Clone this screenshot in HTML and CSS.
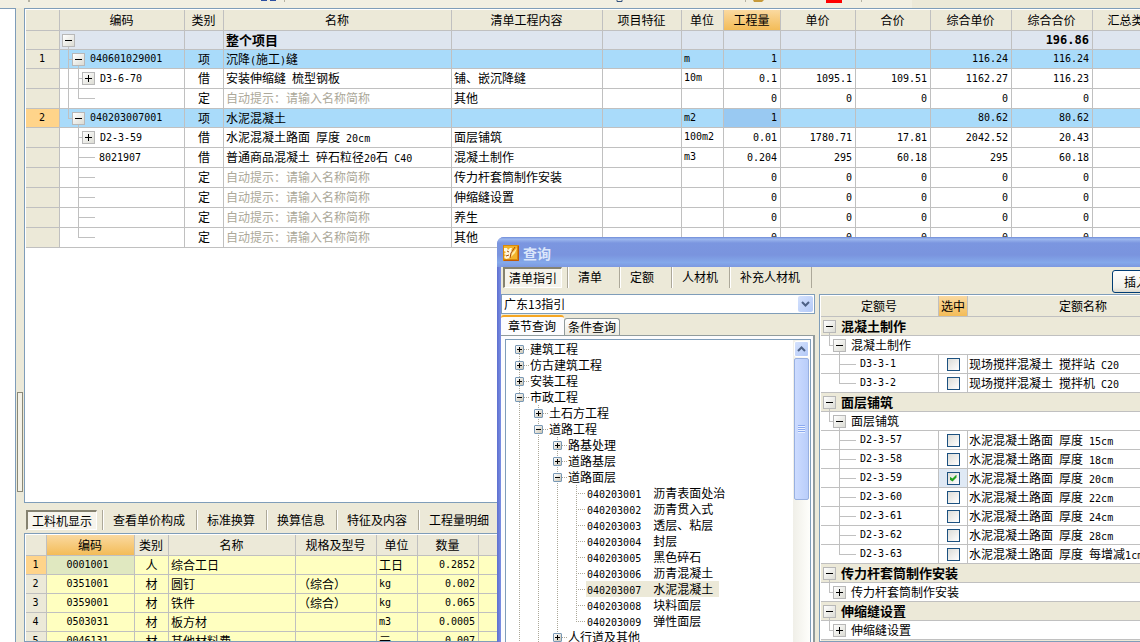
FILE: index.html
```html
<!DOCTYPE html>
<html lang="zh-CN">
<head>
<meta charset="utf-8">
<title>查询</title>
<link rel="stylesheet" href="styles.css">
</head>
<body>
<header class="strip">
  <svg width="912" height="3" aria-hidden="true">
    <rect x="28" width="2" height="2" fill="#b5b2a3"/>
    <path d="M261 0h6v1h-6zM270 0h6v1h-6z" fill="#2b4fa0"/>
    <rect x="284" width="1" height="2" fill="#b5b2a3"/>
    <path d="M617 0v1.500h5V0" fill="none" stroke="#33527e"/>
    <rect x="745" width="1" height="2" fill="#b5b2a3"/>
    <path d="M753 0h11l-2 2h-8z" fill="#c79a3a"/>
    <rect x="826" width="16" height="3" fill="#f00"/>
    <rect x="861" width="1" height="2" fill="#b5b2a3"/>
  </svg>
</header>
<div class="work">
  <aside class="side"></aside>
  <div class="splitter"><span class="handle"></span></div>
  <main class="main">
    <section class="panel bill">
      <table class="grid bill-grid">
        <colgroup><col class="w34"><col class="w125"><col class="w39"><col class="w228"><col class="w151"><col class="w79"><col class="w42"><col class="w57"><col class="w75"><col class="w75"><col class="w81"><col class="w81"><col class="w79"></colgroup>
        <thead>
          <tr><th></th><th>编码</th><th>类别</th><th>名称</th><th>清单工程内容</th><th>项目特征</th><th>单位</th><th class="hot">工程量</th><th>单价</th><th>合价</th><th>综合单价</th><th>综合合价</th><th>汇总类别</th></tr>
        </thead>
        <tbody>
          <tr class="total short"><th></th><td class="tc"><div class="tree l1 down"><button class="box minus" aria-label="折叠"></button></div></td><td></td><td><b class="strong">整个项目</b></td><td></td><td></td><td></td><td></td><td></td><td></td><td></td><td class="num big">196.86</td><td></td></tr>
          <tr class="item short"><th class="n">1</th><td class="tc"><div class="tree l2 a-full down"><button class="box minus" aria-label="折叠"></button><span class="n">040601029001</span></div></td><td class="mid">项</td><td>沉降<span class="n">(</span>施工<span class="n">)</span>缝</td><td></td><td></td><td class="n">m</td><td class="num">1</td><td></td><td></td><td class="num">116.24</td><td class="num">116.24</td><td></td></tr>
          <tr><th></th><td class="tc"><div class="tree l3 a-full b-full"><button class="box plus" aria-label="展开"></button><span class="n">D3-6-70</span></div></td><td class="mid">借</td><td>安装伸缩缝<span class="n"> </span>梳型钢板</td><td>铺、嵌沉降缝</td><td></td><td class="n">10m</td><td class="num">0.1</td><td class="num">1095.1</td><td class="num">109.51</td><td class="num">1162.27</td><td class="num">116.23</td><td></td></tr>
          <tr><th></th><td class="tc"><div class="tree leaf a-full b-half"></div></td><td class="mid">定</td><td class="hint">自动提示：请输入名称简称</td><td>其他</td><td></td><td></td><td class="num">0</td><td class="num">0</td><td class="num">0</td><td class="num">0</td><td class="num">0</td><td></td></tr>
          <tr class="item short"><th class="n now">2</th><td class="tc"><div class="tree l2 a-half down"><button class="box minus" aria-label="折叠"></button><span class="n">040203007001</span></div></td><td class="mid">项</td><td>水泥混凝土</td><td></td><td></td><td class="n">m2</td><td class="num cursor">1</td><td></td><td></td><td class="num">80.62</td><td class="num">80.62</td><td></td></tr>
          <tr><th></th><td class="tc"><div class="tree l3 b-full"><button class="box plus" aria-label="展开"></button><span class="n">D2-3-59</span></div></td><td class="mid">借</td><td>水泥混凝土路面<span class="n"> </span>厚度<span class="n"> 20cm</span></td><td>面层铺筑</td><td></td><td class="n">100m2</td><td class="num">0.01</td><td class="num">1780.71</td><td class="num">17.81</td><td class="num">2042.52</td><td class="num">20.43</td><td></td></tr>
          <tr><th></th><td class="tc"><div class="tree leaf b-full"><span class="n">8021907</span></div></td><td class="mid">借</td><td>普通商品混凝土<span class="n"> </span>碎石粒径<span class="n">20</span>石<span class="n"> C40</span></td><td>混凝土制作</td><td></td><td class="n">m3</td><td class="num">0.204</td><td class="num">295</td><td class="num">60.18</td><td class="num">295</td><td class="num">60.18</td><td></td></tr>
          <tr><th></th><td class="tc"><div class="tree leaf b-full"></div></td><td class="mid">定</td><td class="hint">自动提示：请输入名称简称</td><td>传力杆套筒制作安装</td><td></td><td></td><td class="num">0</td><td class="num">0</td><td class="num">0</td><td class="num">0</td><td class="num">0</td><td></td></tr>
          <tr><th></th><td class="tc"><div class="tree leaf b-full"></div></td><td class="mid">定</td><td class="hint">自动提示：请输入名称简称</td><td>伸缩缝设置</td><td></td><td></td><td class="num">0</td><td class="num">0</td><td class="num">0</td><td class="num">0</td><td class="num">0</td><td></td></tr>
          <tr><th></th><td class="tc"><div class="tree leaf b-full"></div></td><td class="mid">定</td><td class="hint">自动提示：请输入名称简称</td><td>养生</td><td></td><td></td><td class="num">0</td><td class="num">0</td><td class="num">0</td><td class="num">0</td><td class="num">0</td><td></td></tr>
          <tr><th></th><td class="tc"><div class="tree leaf b-half"></div></td><td class="mid">定</td><td class="hint">自动提示：请输入名称简称</td><td>其他</td><td></td><td></td><td class="num">0</td><td class="num">0</td><td class="num">0</td><td class="num">0</td><td class="num">0</td><td></td></tr>
        </tbody>
      </table>
    </section>
    <section class="detail">
      <nav class="tools detail-tools">
        <button class="tool pressed">工料机显示</button>
        <button class="tool">查看单价构成</button>
        <button class="tool">标准换算</button>
        <button class="tool">换算信息</button>
        <button class="tool">特征及内容</button>
        <button class="tool">工程量明细</button>
      </nav>
      <div class="panel">
        <table class="grid parts-grid">
          <colgroup><col class="w21"><col class="w88"><col class="w34"><col class="w127"><col class="w81"><col class="w41"><col class="w61"><col></colgroup>
          <thead><tr><th></th><th class="hot">编码</th><th>类别</th><th>名称</th><th>规格及型号</th><th>单位</th><th>数量</th><th></th></tr></thead>
          <tbody>
            <tr class="short"><th class="n now">1</th><td class="code picked">0001001</td><td class="mid">人</td><td>综合工日</td><td></td><td>工日</td><td class="num">0.2852</td><td></td></tr>
            <tr class="short"><th class="n">2</th><td class="code">0351001</td><td class="mid">材</td><td>圆钉</td><td>（综合）</td><td class="n">kg</td><td class="num">0.002</td><td></td></tr>
            <tr class="short"><th class="n">3</th><td class="code">0359001</td><td class="mid">材</td><td>铁件</td><td>（综合）</td><td class="n">kg</td><td class="num">0.065</td><td></td></tr>
            <tr class="short"><th class="n">4</th><td class="code">0503031</td><td class="mid">材</td><td>板方材</td><td></td><td class="n">m3</td><td class="num">0.0005</td><td></td></tr>
            <tr class="short"><th class="n">5</th><td class="code">0046131</td><td class="mid">材</td><td>其他材料费</td><td></td><td>元</td><td class="num">0.007</td><td></td></tr>
          </tbody>
        </table>
      </div>
    </section>
  </main>
</div>

<section class="dialog" role="dialog" aria-labelledby="dlg-title">
  <div class="titlebar">
    <svg width="16" height="16" viewBox="0 0 16 16" aria-hidden="true">
      <rect width="16" height="16" fill="#d8890c"/>
      <path d="M1 1h13v13H1z" fill="#f3b32a"/>
      <path d="M1 3h3l1 2 2-2h2L8 6l2-1-2 4-1 4-4 1-2-2 2-2-2-1 2-2-2-1z" fill="#fff8dc"/>
      <path d="M12 2L8 8l-1 5M4 6l2 1M3 11l3-1" fill="none" stroke="#a84a05"/>
      <path d="M14 3L9 8l-1 4 4-4z" fill="#ffe9a0"/>
      <path d="M15.500 1v14.500H1" fill="none" stroke="#c25a06"/>
    </svg>
    <h2 id="dlg-title">查询</h2>
  </div>
  <div class="dialog-body">
    <div class="dialog-tools">
      <nav class="tools">
        <button class="tool pressed">清单指引</button>
        <button class="tool">清单</button>
        <button class="tool">定额</button>
        <button class="tool">人材机</button>
        <button class="tool">补充人材机</button>
      </nav>
      <button class="insert">插入</button>
    </div>
    <div class="columns">
      <div class="finder">
        <div class="combo">
          <select aria-label="指引"><option>广东13指引</option></select>
          <span class="arrow"><svg width="9" height="6" viewBox="0 0 9 6" aria-hidden="true"><path d="M1 1l3.500 3.500L8 1" fill="none" stroke="#4d6185" stroke-width="2"/></svg></span>
        </div>
        <div class="tabs" role="tablist">
          <button class="tab on" role="tab" aria-selected="true">章节查询</button>
          <button class="tab" role="tab" aria-selected="false">条件查询</button>
        </div>
        <div class="page">
          <div class="outline">
            <ul class="nodes">
              <li><div class="node"><button class="knob plus" aria-label="展开"></button><span>建筑工程</span></div></li>
              <li><div class="node"><button class="knob plus" aria-label="展开"></button><span>仿古建筑工程</span></div></li>
              <li><div class="node"><button class="knob plus" aria-label="展开"></button><span>安装工程</span></div></li>
              <li><div class="node"><button class="knob minus" aria-label="折叠"></button><span>市政工程</span></div>
                <ul>
                  <li><div class="node"><button class="knob plus" aria-label="展开"></button><span>土石方工程</span></div></li>
                  <li><div class="node"><button class="knob minus" aria-label="折叠"></button><span>道路工程</span></div>
                    <ul>
                      <li><div class="node"><button class="knob plus" aria-label="展开"></button><span>路基处理</span></div></li>
                      <li><div class="node"><button class="knob plus" aria-label="展开"></button><span>道路基层</span></div></li>
                      <li><div class="node"><button class="knob minus" aria-label="折叠"></button><span>道路面层</span></div>
                        <ul class="ends">
                          <li><div class="node end"><span><span class="n">040203001  </span>沥青表面处治</span></div></li>
                          <li><div class="node end"><span><span class="n">040203002  </span>沥青贯入式</span></div></li>
                          <li><div class="node end"><span><span class="n">040203003  </span>透层、粘层</span></div></li>
                          <li><div class="node end"><span><span class="n">040203004  </span>封层</span></div></li>
                          <li><div class="node end"><span><span class="n">040203005  </span>黑色碎石</span></div></li>
                          <li><div class="node end"><span><span class="n">040203006  </span>沥青混凝土</span></div></li>
                          <li><div class="node end"><span class="sel"><span class="n">040203007  </span>水泥混凝土</span></div></li>
                          <li><div class="node end"><span><span class="n">040203008  </span>块料面层</span></div></li>
                          <li><div class="node end"><span><span class="n">040203009  </span>弹性面层</span></div></li>
                        </ul>
                      </li>
                      <li><div class="node"><button class="knob plus" aria-label="展开"></button><span>人行道及其他</span></div></li>
                    </ul>
                  </li>
                </ul>
              </li>
            </ul>
            <div class="scroll">
              <button class="up" aria-label="向上"><svg width="9" height="6" viewBox="0 0 9 6" aria-hidden="true"><path d="M1 5l3.500-3.500L8 5" fill="none" stroke="#4d6185" stroke-width="2"/></svg></button>
              <div class="thumb"><span></span></div>
            </div>
          </div>
        </div>
      </div>
      <div class="panel quota">
        <table class="grid quota-grid">
          <colgroup><col class="w118"><col class="w29"><col></colgroup>
          <thead><tr><th>定额号</th><th class="hot tight">选中</th><th>定额名称</th></tr></thead>
          <tbody>
            <tr class="group short"><td colspan="3" class="tc"><div class="tree l1 down"><button class="box minus" aria-label="折叠"></button><span class="strong">混凝土制作</span></div></td></tr>
            <tr class="short"><td colspan="3" class="tc"><div class="tree l2 a-half down"><button class="box minus" aria-label="折叠"></button><span>混凝土制作</span></div></td></tr>
            <tr class="short"><td class="tc"><div class="tree leaf b-full"><span class="n">D3-3-1</span></div></td><td class="mark"><input type="checkbox" aria-label="D3-3-1"></td><td class="name">现场搅拌混凝土<span class="n"> </span>搅拌站<span class="n"> C20</span></td></tr>
            <tr class="short"><td class="tc"><div class="tree leaf b-half"><span class="n">D3-3-2</span></div></td><td class="mark"><input type="checkbox" aria-label="D3-3-2"></td><td class="name">现场搅拌混凝土<span class="n"> </span>搅拌机<span class="n"> C20</span></td></tr>
            <tr class="group short"><td colspan="3" class="tc"><div class="tree l1 down"><button class="box minus" aria-label="折叠"></button><span class="strong">面层铺筑</span></div></td></tr>
            <tr class="short"><td colspan="3" class="tc"><div class="tree l2 a-half down"><button class="box minus" aria-label="折叠"></button><span>面层铺筑</span></div></td></tr>
            <tr class="short"><td class="tc"><div class="tree leaf b-full"><span class="n">D2-3-57</span></div></td><td class="mark"><input type="checkbox" aria-label="D2-3-57"></td><td class="name">水泥混凝土路面<span class="n"> </span>厚度<span class="n"> 15cm</span></td></tr>
            <tr class="short"><td class="tc"><div class="tree leaf b-full"><span class="n">D2-3-58</span></div></td><td class="mark"><input type="checkbox" aria-label="D2-3-58"></td><td class="name">水泥混凝土路面<span class="n"> </span>厚度<span class="n"> 18cm</span></td></tr>
            <tr class="short"><td class="tc"><div class="tree leaf b-full"><span class="n">D2-3-59</span></div></td><td class="mark focus"><input type="checkbox" aria-label="D2-3-59" checked></td><td class="name">水泥混凝土路面<span class="n"> </span>厚度<span class="n"> 20cm</span></td></tr>
            <tr class="short"><td class="tc"><div class="tree leaf b-full"><span class="n">D2-3-60</span></div></td><td class="mark"><input type="checkbox" aria-label="D2-3-60"></td><td class="name">水泥混凝土路面<span class="n"> </span>厚度<span class="n"> 22cm</span></td></tr>
            <tr class="short"><td class="tc"><div class="tree leaf b-full"><span class="n">D2-3-61</span></div></td><td class="mark"><input type="checkbox" aria-label="D2-3-61"></td><td class="name">水泥混凝土路面<span class="n"> </span>厚度<span class="n"> 24cm</span></td></tr>
            <tr class="short"><td class="tc"><div class="tree leaf b-full"><span class="n">D2-3-62</span></div></td><td class="mark"><input type="checkbox" aria-label="D2-3-62"></td><td class="name">水泥混凝土路面<span class="n"> </span>厚度<span class="n"> 28cm</span></td></tr>
            <tr class="short"><td class="tc"><div class="tree leaf b-half"><span class="n">D2-3-63</span></div></td><td class="mark"><input type="checkbox" aria-label="D2-3-63"></td><td class="name">水泥混凝土路面<span class="n"> </span>厚度<span class="n"> </span>每增减<span class="n">1cm</span></td></tr>
            <tr class="group short"><td colspan="3" class="tc"><div class="tree l1 down"><button class="box minus" aria-label="折叠"></button><span class="strong">传力杆套筒制作安装</span></div></td></tr>
            <tr class="short"><td colspan="3" class="tc"><div class="tree l2 a-half"><button class="box plus" aria-label="展开"></button><span>传力杆套筒制作安装</span></div></td></tr>
            <tr class="group short"><td colspan="3" class="tc"><div class="tree l1 down"><button class="box minus" aria-label="折叠"></button><span class="strong">伸缩缝设置</span></div></td></tr>
            <tr class="short"><td colspan="3" class="tc"><div class="tree l2 a-half"><button class="box plus" aria-label="展开"></button><span>伸缩缝设置</span></div></td></tr>
            <tr class="group short"><td colspan="3"></td></tr>
          </tbody>
        </table>
      </div>
    </div>
  </div>
</section>
</body>
</html>
```

FILE: styles.css
```css
:root {
  --face: #ece9d8;
  --edge: #7f9db9;
  --line: #c0c0c0;
  --ink: linear-gradient(#c0c0c0, #c0c0c0);
  --dots-v: repeating-linear-gradient(to bottom, #aca899 0 1px, transparent 1px 2px);
  --dots-h: repeating-linear-gradient(to right, #aca899 0 1px, transparent 1px 2px);
}
* { box-sizing: border-box; }
body {
  margin: 0;
  height: 100vh;
  display: flex;
  flex-direction: column;
  position: relative;
  overflow: hidden;
  background: var(--face);
  color: #000;
  font: 12px/16px "Noto Sans CJK SC", sans-serif;
}
button, select, input { font: inherit; color: inherit; margin: 0; padding: 0; }
.n, .num, .code { font-family: "DejaVu Sans Mono", monospace; font-size: 10px; white-space: pre; }
span.n { line-height: 10px; }
.strong { font-size: 13px; font-weight: bold; line-height: 14px; }

.strip { flex: none; height: 8px; line-height: 0; }
.strip svg { background: #f1efe2; height: 8px; }
.work { flex: 1; min-height: 0; display: flex; }
.side { flex: none; width: 16px; background: #fff; border: solid var(--edge); border-width: 1px 1px 0 0; }
.splitter { flex: none; width: 8px; padding: 384px 1px 0; }
.handle { display: block; height: 100px; width: 6px; border: 1px solid #8a8878; background: #f4f2e8; }
.main { flex: 1; min-width: 0; display: flex; flex-direction: column; }
.panel { background: #fff; border: 1px solid var(--edge); border-right: 0; padding: 1px 0 0 1px; overflow: hidden; }
.bill { flex: 1; min-height: 0; }

.grid { border-collapse: separate; border-spacing: 0; table-layout: fixed; }
.grid th, .grid td {
  height: 20px;
  padding: 0 3px 1px 2px;
  border: solid var(--line);
  border-width: 0 1px 1px 0;
  line-height: 16px;
  white-space: nowrap;
  overflow: hidden;
  text-align: left;
  font-weight: normal;
}
.grid .short th, .grid .short td { height: 19px; }
.grid thead th { height: 21px; }
.grid th { background: var(--face); text-align: center; }
.grid .hot { background: linear-gradient(#fad9a0, #f3bc58); }
.grid .tight { padding: 0 0 1px; }
.grid .now { background: #ffd48a; }
.grid .mid { text-align: center; padding: 0 0 1px; }
.grid .num { text-align: right; padding-bottom: 0; }
.grid .big { font-size: 12px; font-weight: bold; }
.grid .code { text-align: center; padding-right: 8px; }
.grid .hint { color: #aca899; }
.grid .tc { padding: 0; }
.bill-grid { width: 1146px; }
.parts-grid { width: 100%; }
.parts-grid td { background: #ffffc0; }
.parts-grid .picked { background: #e0e8c0; }
.quota-grid { width: 100%; }
.total td { background: #dee5ef; }
.item td { background: #a9dbfa; }
.item .cursor { background: #99c9f2; }
.group td { background: var(--face); }
.w21 { width: 21px; } .w29 { width: 29px; } .w34 { width: 34px; } .w39 { width: 39px; }
.w41 { width: 41px; } .w42 { width: 42px; } .w57 { width: 57px; } .w61 { width: 61px; }
.w75 { width: 75px; } .w79 { width: 79px; } .w81 { width: 81px; } .w88 { width: 88px; }
.w118 { width: 118px; } .w125 { width: 125px; } .w127 { width: 127px; }
.w151 { width: 151px; } .w228 { width: 228px; }

/* Tree cells: two vertical guides, one branch and a stub below an open box */
.tree {
  display: flex;
  align-items: center;
  gap: 5px;
  height: 19px;
  background:
    var(--ink) 8px 0 / 1px var(--a, 0) no-repeat,
    var(--ink) 18px 0 / 1px var(--b, 0) no-repeat,
    var(--ink) var(--hx, 0) 9px / var(--hw, 0) 1px no-repeat,
    var(--ink) var(--dx, 0) 100% / 1px var(--d, 0) no-repeat;
}
.short .tree { height: 18px; }
.l1 { padding-left: 2px; --dx: 8px; }
.l2 { padding-left: 12px; --hx: 8px; --hw: 4px; --dx: 18px; }
.l3 { padding-left: 22px; --hx: 18px; --hw: 4px; }
.leaf { padding-left: 39px; --hx: 18px; --hw: 17px; }
.a-full { --a: 100%; }
.a-half { --a: 9px; }
.b-full { --b: 100%; }
.b-half { --b: 10px; }
.down { --d: 3px; }
.box {
  flex: none;
  width: 13px;
  height: 13px;
  border: 1px solid #b8b8b8;
  --sign: linear-gradient(#000, #000);
}
.box.minus { background: var(--sign) center / 7px 1px no-repeat, linear-gradient(135deg, #fff, #dcdcd4); }
.box.plus { background: var(--sign) center / 7px 1px no-repeat, var(--sign) center / 1px 7px no-repeat, linear-gradient(135deg, #fff, #dcdcd4); }

.detail { flex: none; height: 139px; display: flex; flex-direction: column; }
.detail .panel { flex: 1; }
.tools { display: flex; align-items: center; }
.detail-tools { height: 30px; padding: 4px 2px 0; }
.tool { height: 20px; padding: 0 11px 0 10px; border: 0; background: none; white-space: nowrap; line-height: 16px; }
.tool + .tool { border-left: 1px solid #aca899; box-shadow: inset 1px 0 #fff; }
.tool.pressed {
  padding: 0 4px;
  margin-right: 5px;
  border: solid;
  border-width: 2px 1px 1px 2px;
  border-color: #858270 #fff #fff #858270;
  background: #f6f4ec;
}

.dialog {
  position: absolute;
  left: 497px;
  top: 237px;
  right: -60px;
  bottom: 0;
  display: flex;
  flex-direction: column;
  overflow: hidden;
  border-radius: 7px 7px 0 0;
  background: linear-gradient(to right, #5d6fd0, #7c8fe2 4px);
}
.titlebar {
  flex: none;
  height: 30px;
  padding: 2px 6px 0;
  display: flex;
  align-items: center;
  gap: 4px;
  background: linear-gradient(#6f8bd8, #9db8ee 7%, #7b96e0 20%, #7a94de 60%, #84a8ea 85%, #7c98e0);
}
.titlebar h2 { margin: 0; padding-bottom: 1px; font-size: 14px; line-height: 20px; color: #dbe6fb; }
.dialog-body { flex: 1; min-height: 0; margin-left: 4px; background: var(--face); display: flex; flex-direction: column; }
.dialog-tools { flex: none; height: 27px; display: flex; align-items: center; justify-content: space-between; padding: 0 13px 6px 2px; }
.dialog-tools .tool { height: 21px; padding-bottom: 2px; }
.dialog-tools .tool.pressed { padding-bottom: 0; }
.dialog-tools .tool:nth-child(2), .dialog-tools .tool:nth-child(3) { padding-right: 17px; }
.dialog-tools .tool:last-child { border-right: 1px solid #aca899; }
.insert { align-self: flex-end; flex: none; width: 75px; height: 23px; padding: 0 11px; text-align: left; border: 1px solid #003c74; border-radius: 3px; background: linear-gradient(#fff, #f0efe8 80%, #dcd8cc); margin-bottom: -5px; }
.columns { flex: 1; min-height: 0; display: flex; gap: 4px; }
.finder { flex: none; width: 314px; display: flex; flex-direction: column; }
.combo { flex: none; position: relative; height: 20px; }
.combo select { width: 100%; height: 20px; padding: 0 20px 1px 2px; border: 1px solid var(--edge); border-radius: 0; background: #fff; appearance: none; line-height: 16px; }
.arrow {
  position: absolute;
  right: 2px;
  top: 2px;
  width: 15px;
  height: 16px;
  display: grid;
  place-items: center;
  border-radius: 2px;
  background: linear-gradient(135deg, #d5e2fd, #b3c9f7);
  pointer-events: none;
}
.tabs { flex: none; display: flex; align-items: flex-end; height: 21px; }
.tab { height: 17px; padding: 0 3px; border: 1px solid #919b9c; border-bottom: 0; border-radius: 3px 3px 0 0; background: linear-gradient(#fff, #eceae0); line-height: 16px; }
.tab.on { height: 21px; padding: 0 8px 2px 7px; border: 0; border-top: 2px solid #f5a623; background: #fcfcfe; margin-bottom: -1px; }
.page { flex: 1; min-height: 0; padding: 3px 2px 0 4px; background: #fcfcfe; border: solid #919b9c; border-width: 1px 2px 0 0; display: flex; }
.outline { flex: 1; display: flex; justify-content: space-between; overflow: hidden; background: #fff; border: solid var(--edge); border-width: 1px 1px 0; }
.outline ul { list-style: none; margin: 0; padding: 0; background: var(--dots-v) 4px 0 / 1px 100% no-repeat; }
.outline .nodes { margin: 0 0 0 9px; padding-top: 1px; background-position: 4px 8px; }
.outline ul ul { margin-left: 19px; }
.outline .ends { background-size: 1px calc(100% - 8px); }
.node { display: flex; align-items: center; height: 16px; padding-right: 6px; background: var(--dots-h) 9px 8px / 5px 1px no-repeat; white-space: nowrap; }
.node > span { height: 16px; line-height: 15px; padding: 0 6px 0 1px; margin-left: 5px; }
.node.end { background-position: 4px 8px; background-size: 9px 1px; }
.node.end > span { margin-left: 14px; }
.sel { background: var(--face); }
.knob { flex: none; width: 9px; height: 9px; border: 1px solid #7898b5; border-radius: 1px; --sign: linear-gradient(#000, #000); }
.knob.minus { background: var(--sign) center / 5px 1px no-repeat, linear-gradient(135deg, #fff, #cbc5b4); }
.knob.plus { background: var(--sign) center / 5px 1px no-repeat, var(--sign) center / 1px 5px no-repeat, linear-gradient(135deg, #fff, #cbc5b4); }
.scroll { flex: none; width: 17px; padding: 1px; background: linear-gradient(to right, #f0efe8, #fefefb); display: flex; flex-direction: column; gap: 1px; }
.up { flex: none; height: 16px; border: 1px solid #fff; border-radius: 2px; background: linear-gradient(135deg, #d5e2fd, #b3c9f7); display: grid; place-items: center; }
.thumb { flex: none; height: 142px; border: 1px solid #98b0e0; border-radius: 2px; background: linear-gradient(to right, #cddcff, #b9cdfa); display: grid; place-items: center; }
.thumb span { width: 7px; height: 8px; background: repeating-linear-gradient(#8caaf0 0 1px, #eaf1ff 1px 2px); }
.quota { flex: 1; min-width: 0; }
.grid .mark { padding: 0; text-align: center; line-height: 0; }
.grid .focus { background: #dfe9f5; }
.grid .name { padding: 0 1px 1px; }
.mark input {
  appearance: none;
  display: inline-block;
  vertical-align: middle;
  width: 13px;
  height: 13px;
  border: 1px solid #1c5180;
  background: linear-gradient(135deg, #dcdcd7, #fff);
}
.mark input:checked::before {
  content: "";
  display: block;
  width: 7px;
  height: 7px;
  margin: 2px;
  background: #21a121;
  clip-path: polygon(0 29%, 43% 57%, 100% 0, 100% 43%, 43% 100%, 0 71%);
}
```
